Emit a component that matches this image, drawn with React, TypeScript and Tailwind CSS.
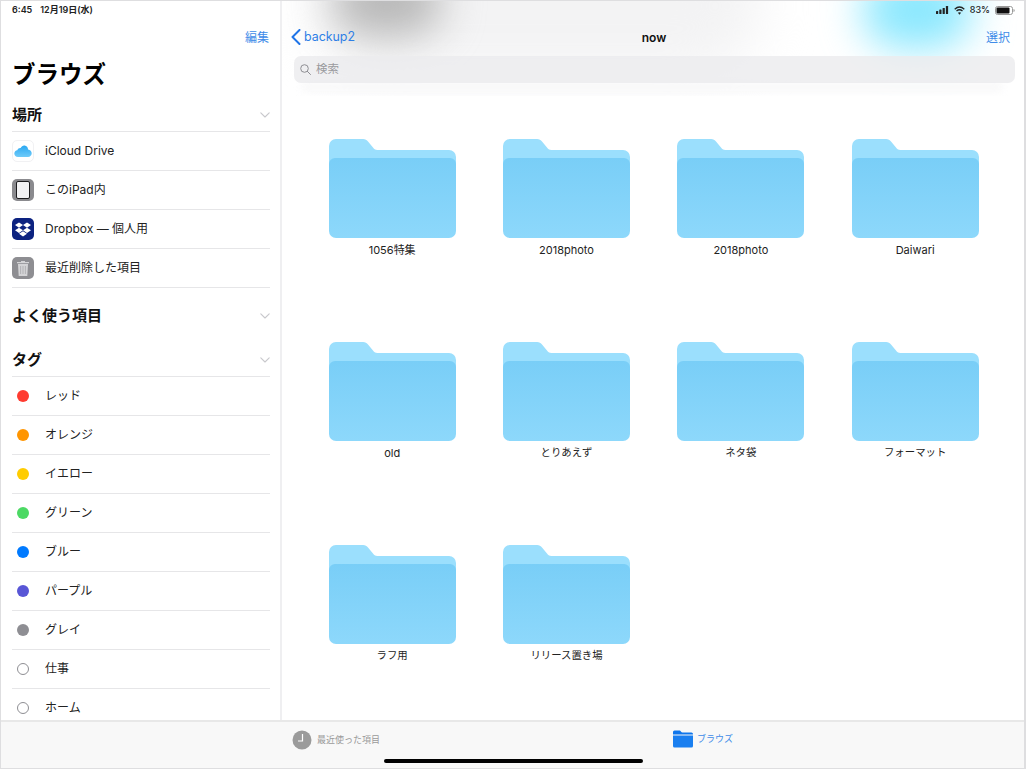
import React from "react";

const font = { fontFamily: '"Inter","Noto Sans CJK JP",sans-serif' };

function Chevron() {
  return (
    <svg width="10" height="6" viewBox="0 0 10 6" fill="none">
      <path d="M.8.8l4.200 4.200L9.200.8" stroke="#c8c8cc" strokeWidth="1.100" strokeLinecap="round" strokeLinejoin="round" />
    </svg>
  );
}

function Header({ title }: { title: string }) {
  return (
    <div className="h-[44px] pt-[12px] flex items-center justify-between">
      <span className="text-[15px] font-semibold text-[#111]">{title}</span>
      <Chevron />
    </div>
  );
}

function Row({ icon, label, last }: { icon: React.ReactNode; label: string; last?: boolean }) {
  return (
    <div className={`flex items-center border-t border-[#e6e6e8] ${last ? "h-[40px] border-b" : "h-[39px]"}`}>
      <div className="w-[22px] h-[22px] flex items-center justify-center shrink-0">{icon}</div>
      <span className="ml-[11px] text-[12px] text-[#222]">{label}</span>
    </div>
  );
}

function ICloud() {
  return (
    <div className="w-[22px] h-[22px] rounded-[5px] bg-white border border-[#f1f1f3] flex items-center justify-center">
      <svg width="18" height="12" viewBox="0 0 18 12">
        <defs>
          <linearGradient id="cl" x1="0" y1="0" x2="0" y2="1">
            <stop offset="0" stopColor="#2aa8f2" />
            <stop offset="1" stopColor="#6fcbf9" />
          </linearGradient>
        </defs>
        <path d="M4 12C1.800 12 .3 10.500.3 8.600c0-1.800 1.300-3.200 3-3.400C3.900 3.600 5.300 2.800 6.600 3 7.500 1.300 9 .4 10.600.6c2 .2 3.400 1.900 3.500 3.900 2 .2 3.600 1.800 3.600 3.800S16.200 12 14 12H4z" fill="url(#cl)" />
      </svg>
    </div>
  );
}

function IPad() {
  return (
    <div className="w-[22px] h-[22px] rounded-[5px] bg-[#8a8a8e] flex items-center justify-center">
      <div className="w-[14px] h-[18px] rounded-[2px] bg-[#f2f2f4] border-[1.5px] border-[#1c1c1e]" />
    </div>
  );
}

function DropboxIcon() {
  return (
    <div className="w-[22px] h-[22px] rounded-[5px] bg-[#0c2280] flex items-center justify-center">
      <svg width="16" height="15" viewBox="0 0 16 15" fill="#fff">
        <path d="M4 .5L0 3.100l4 2.600 4-2.600zM12 .5L8 3.100l4 2.600 4-2.600zM0 8.300l4 2.600 4-2.600-4-2.600zM12 5.700L8 8.300l4 2.600 4-2.600zM4 11.800l4 2.700 4-2.700-4-2.600z" />
      </svg>
    </div>
  );
}

function Trash() {
  return (
    <div className="w-[22px] h-[22px] rounded-[5px] bg-[#8e8e92] flex items-center justify-center">
      <svg width="12" height="15" viewBox="0 0 12 15" fill="#d4d4d6">
        <path d="M4 0h4v1h4v1.200H0V1h4zM1 3h10l-.7 12H1.700z" />
        <path d="M3.600 5v8M6 5v8M8.400 5v8" stroke="#9a9a9e" strokeWidth=".6" />
      </svg>
    </div>
  );
}

function Dot({ color }: { color: string }) {
  return <div className="w-[12px] h-[12px] rounded-full" style={{ backgroundColor: color }} />;
}

function Ring() {
  return <div className="w-[12px] h-[12px] rounded-full border border-[#8e8e93] bg-white" />;
}

function Folder({ label, small }: { label: string; small: boolean }) {
  const id = "f" + label;
  return (
    <div className="flex flex-col items-center">
      <svg width="127" height="99" viewBox="0 0 127 99" className="block">
        <defs>
          <linearGradient id={id} x1="0" y1="0" x2="0" y2="1">
            <stop offset="0" stopColor="#79cef7" />
            <stop offset="1" stopColor="#8dd8fb" />
          </linearGradient>
        </defs>
        <path d="M0 7a7 7 0 0 1 7-7h27c2.400 0 3.800 1 5 2.500l5 6c1 1.200 2 2.500 4.500 2.500H120a7 7 0 0 1 7 7V40H0z" fill="#9bdffd" />
        <path d="M0 25a6 6 0 0 1 6-6h115a6 6 0 0 1 6 6v67a7 7 0 0 1-7 7H7a7 7 0 0 1-7-7z" fill={`url(#${id})`} />
      </svg>
      <span className={`mt-[4px] leading-[16px] text-[#222] ${small ? "text-[10.4px]" : "text-[11px]"}`}>{label}</span>
    </div>
  );
}

const folders = [
  { label: "1056特集", small: false },
  { label: "2018photo", small: false },
  { label: "2018photo", small: false },
  { label: "Daiwari", small: false },
  { label: "old", small: false },
  { label: "とりあえず", small: true },
  { label: "ネタ袋", small: true },
  { label: "フォーマット", small: true },
  { label: "ラフ用", small: true },
  { label: "リリース置き場", small: true },
];

export default function App() {
  return (
    <div style={font} className="w-[1026px] h-[769px] flex flex-col bg-white border-t border-l border-r-2 border-b border-[#dedee0] overflow-hidden">
      <div className="flex-1 flex min-h-0">
        <aside className="w-[281px] shrink-0 border-r-2 border-[#efeff1] overflow-hidden pl-[11px] pr-[10px]">
          <div className="h-[18px] flex items-center gap-[8px] text-[9px] font-semibold text-[#222]">
            <span>6:45</span>
            <span>12月19日(水)</span>
          </div>
          <div className="h-[37px] flex items-center justify-end pr-[1px] text-[12px] text-[#3f8ce8]">編集</div>
          <div className="h-[31px] pt-[6px] flex items-center text-[23.5px] font-bold text-black">ブラウズ</div>
          <Header title="場所" />
          <Row icon={<ICloud />} label="iCloud Drive" />
          <Row icon={<IPad />} label="このiPad内" />
          <Row icon={<DropboxIcon />} label="Dropbox — 個人用" />
          <Row icon={<Trash />} label="最近削除した項目" last />
          <Header title="よく使う項目" />
          <Header title="タグ" />
          <Row icon={<Dot color="#ff3b30" />} label="レッド" />
          <Row icon={<Dot color="#ff9500" />} label="オレンジ" />
          <Row icon={<Dot color="#ffcc00" />} label="イエロー" />
          <Row icon={<Dot color="#4cd964" />} label="グリーン" />
          <Row icon={<Dot color="#007aff" />} label="ブルー" />
          <Row icon={<Dot color="#5856d6" />} label="パープル" />
          <Row icon={<Dot color="#8e8e93" />} label="グレイ" />
          <Row icon={<Ring />} label="仕事" />
          <Row icon={<Ring />} label="ホーム" />
        </aside>

        <main className="relative flex-1 min-w-0 overflow-hidden">
          <div className="absolute left-0 right-0 top-0 h-[95px] overflow-hidden">
            <div className="absolute left-[30px] top-[-60px] w-[450px] h-[130px] rounded-full bg-[#f3f3f4] blur-[25px]" />
            <div className="absolute left-[50px] top-[-35px] w-[110px] h-[70px] rounded-full bg-[#b8b8b8] blur-[20px]" />
            <div className="absolute left-[580px] top-[-30px] w-[110px] h-[78px] rounded-full bg-[#8be8fe] blur-[20px]" />
            <div className="absolute left-[20px] top-[82px] w-[700px] h-[8px] bg-[#f7f7f8] blur-[4px]" />
          </div>

          <div className="relative">
            <div className="h-[18px] flex items-center justify-end gap-[4px] pr-[9px] text-[9px] font-medium text-[#222]">
              <svg width="13" height="8" viewBox="0 0 13 8" fill="#222">
                <rect x="0" y="5" width="2.200" height="3" rx=".5" />
                <rect x="3.300" y="3.500" width="2.200" height="4.500" rx=".5" />
                <rect x="6.600" y="2" width="2.200" height="6" rx=".5" />
                <rect x="9.900" y="0" width="2.200" height="8" rx=".5" />
              </svg>
              <svg width="11" height="9" viewBox="0 0 11 9" fill="none" stroke="#222" strokeWidth="1.300" className="mx-[1px]">
                <path d="M.7 3.200C3.600.6 7.400.6 10.300 3.200M2.500 5C4.300 3.500 6.700 3.500 8.500 5" />
                <path d="M5.500 8.800L3.900 6.800C4.800 6.100 6.200 6.100 7.100 6.800z" fill="#222" stroke="none" />
              </svg>
              <span>83%</span>
              <svg width="20" height="9" viewBox="0 0 20 9" className="ml-[1px]">
                <rect x=".5" y=".5" width="17" height="8" rx="2" fill="none" stroke="#999" />
                <rect x="1.500" y="1.500" width="13" height="6" rx="1" fill="#111" />
                <path d="M18.500 3v3c.8-.2 1.200-.8 1.200-1.500S19.300 3.200 18.500 3z" fill="#999" />
              </svg>
            </div>

            <div className="h-[37px] grid grid-cols-3 items-center pl-[9px] pr-[14px]">
              <div className="flex items-center gap-[3px] text-[12.4px] text-[#2e7fe6]">
                <svg width="10" height="16" viewBox="0 0 10 16" fill="none">
                  <path d="M8.500 1L1.500 8l7 7" stroke="#1f74e8" strokeWidth="2" strokeLinecap="round" strokeLinejoin="round" />
                </svg>
                <span>backup2</span>
              </div>
              <span className="text-center pl-[7px] text-[12px] font-semibold text-[#111]">now</span>
              <span className="text-right text-[12px] text-[#3f8ce8]">選択</span>
            </div>

            <div className="ml-[12px] mr-[9px] h-[27px] rounded-[7px] bg-[#ebebee]/80 flex items-center pl-[6px] text-[11.5px] text-[#9a9a9e]">
              <svg width="11" height="11" viewBox="0 0 11 11" fill="none" stroke="#8e8e93" strokeWidth="1">
                <circle cx="4.500" cy="4.500" r="3.800" />
                <path d="M7.300 7.300l3.200 3.200" strokeLinecap="round" />
              </svg>
              <span className="ml-[5px]">検索</span>
            </div>

            <div className="mt-[56px] ml-[23px] grid grid-cols-[repeat(4,174.33px)] auto-rows-[203px]">
              {folders.map((f, i) => (
                <Folder key={i} label={f.label} small={f.small} />
              ))}
            </div>
          </div>
        </main>
      </div>

      <footer className="relative h-[48px] shrink-0 bg-[#f8f8f8] border-t-2 border-[#e8e8e8] flex">
        <div className="w-[281px] shrink-0" />
        <div className="flex-1 flex pt-[8px] items-start">
          <div className="ml-[10px] flex items-center">
            <svg width="20" height="20" viewBox="0 0 20 20">
              <circle cx="10" cy="10" r="9.500" fill="#9b9b9b" />
              <path d="M10.500 4v7H6" fill="none" stroke="#fff" strokeWidth="1.200" />
            </svg>
            <span className="ml-[5px] text-[9px] text-[#9a9a9a]">最近使った項目</span>
          </div>
          <div className="ml-[293px] flex items-center">
            <svg width="20" height="18" viewBox="0 0 20 18">
              <path d="M0 2a1.500 1.500 0 0 1 1.500-1.500h4.600c1 0 1.400.4 2 1.200.3.400.6.800 1.300.800h9.100A1.500 1.500 0 0 1 20 4v.5H0z" fill="#0f76ec" />
              <path d="M0 5.500h20V16a1.500 1.500 0 0 1-1.500 1.500h-17A1.500 1.500 0 0 1 0 16z" fill="#1a7ff0" />
            </svg>
            <span className="ml-[4px] text-[9px] text-[#3f8ce8]">ブラウズ</span>
          </div>
        </div>
        <div className="absolute left-[383px] top-[37px] w-[259px] h-[4px] rounded-full bg-black" />
      </footer>
    </div>
  );
}
